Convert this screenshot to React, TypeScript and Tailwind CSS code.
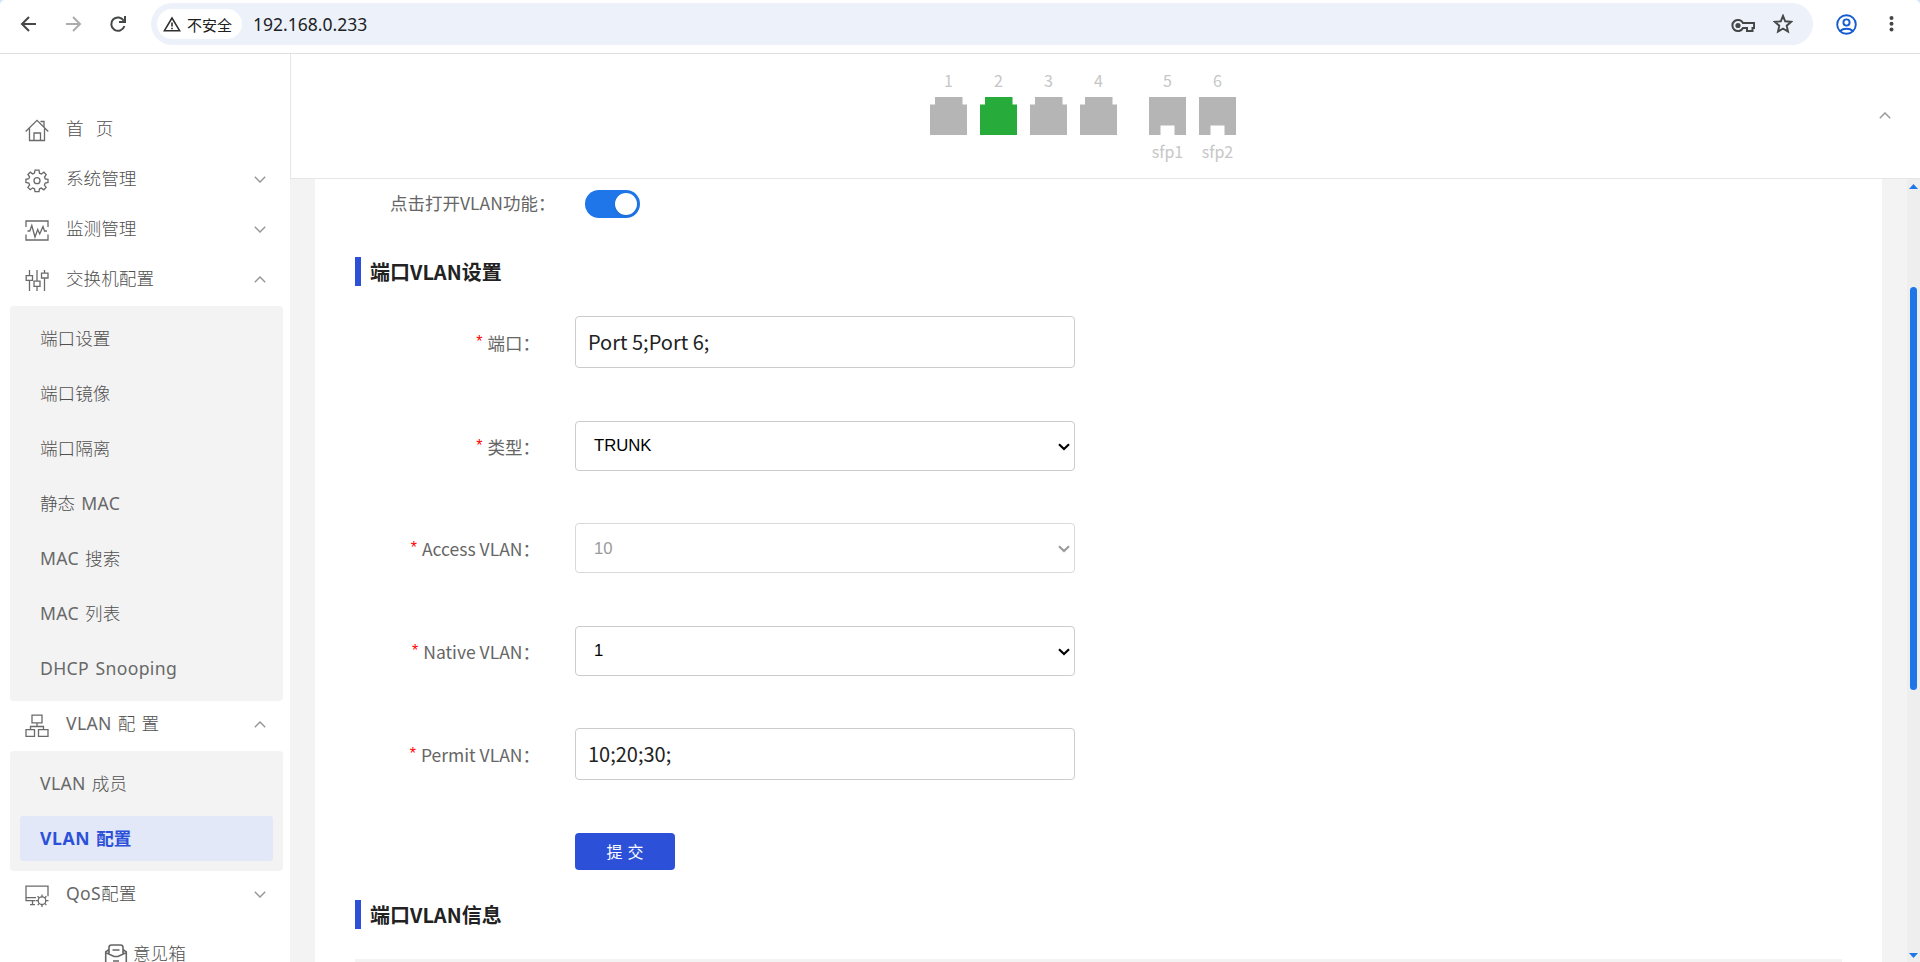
import React from "react";

const SANS = "font-['Noto_Sans','Noto_Sans_CJK_SC',sans-serif]";
const CJK = "font-['Noto_Sans_CJK_SC',sans-serif]";

type IconProps = { children: React.ReactNode };

function MenuIcon({ children }: IconProps) {
  return (
    <svg className="-ml-px h-6 w-6 shrink-0" viewBox="0 0 24 24" fill="none" stroke="#6a6a6a" strokeWidth="1.3">
      {children}
    </svg>
  );
}

const HomeIcon = () => (
  <MenuIcon>
    <path d="M.7 12.500 12 1.300 23.300 12.500M4.500 9.500v12h15v-12M9 21.500V14h6.500v7.500M15.500 2.500h3.500V8" />
  </MenuIcon>
);

const GearIcon = () => (
  <MenuIcon>
    <circle cx="12" cy="11.700" r="3" />
    <path d="M10 1.200h4l.5 3 1.900.8 2.500-1.800 2.300 2.400-1.700 2.500.7 1.700 2.800.5v3.200l-2.800.6-.8 1.900 1.700 2.500-2.300 2.300-2.500-1.700-1.800.7-.5 2.800h-4l-.5-2.800-1.900-.8-2.400 1.700-2.300-2.300 1.700-2.500-.8-1.900-2.900-.5v-3.200l2.900-.6.8-1.800-1.700-2.400 2.300-2.300 2.400 1.700 1.900-.8z" />
  </MenuIcon>
);

const MonitorIcon = () => (
  <MenuIcon>
    <path d="M1 8V2h22v6M1 15.500V21h22v-5.500M2.500 12h2.300l2-5.500L10 18l2.700-7.500 2 4.500 3.300-7.500 1.500 4.500h2.500" />
  </MenuIcon>
);

const SlidersIcon = () => (
  <MenuIcon>
    <path d="M4.500 1v5.500M4.500 11.500V22M12 1v11M12 17.500V22M19.500 1v3.500M19.500 9.500V22M1.200 6.700h6.300v4.600H1.200zM9 12.200h6v5.100H9zM16.500 4.200H23v4.800h-6.500z" />
  </MenuIcon>
);

const TopologyIcon = () => (
  <MenuIcon>
    <path d="M7 1.200h10v7.600H7zM1 15.700h8.500v6.600H1zM13.500 15.700H23v6.600h-9.500zM12 8.800v3.700M5.500 15.700v-3.200h13v3.200" />
  </MenuIcon>
);

const QosIcon = () => (
  <MenuIcon>
    <path d="M10.500 16.700H1V2.200h22v10M1 13.700h10M7.500 16.700v4M5 20.700h5" />
    <circle cx="17" cy="16.700" r="3.800" />
    <path d="M17 10.500v2.400M17 20.500v2.500M11 16.700h2.200M20.800 16.700h2.700M12.600 12.300l1.700 1.700M19.700 19.400l1.700 1.700M21.400 12.300l-1.700 1.700M14.300 19.400l-1.700 1.700" />
  </MenuIcon>
);

function Chevron({ up }: { up?: boolean }) {
  return (
    <svg className="h-[7px] w-3 shrink-0" viewBox="0 0 12 7" fill="none" stroke="#999" strokeWidth="1.5">
      <path d={up ? "M.8 6.200 6 1l5.200 5.200" : "M.8.8 6 6 11.200.8"} />
    </svg>
  );
}

/* Latin runs are set in the regular weight beside the light Chinese glyphs. */
function Mixed({ text, bold }: { text: string; bold?: boolean }) {
  return (
    <>
      {text.split(/([A-Za-z]+(?: [A-Za-z]+)*)/).map((run, i) =>
        /[A-Za-z]/.test(run) ? (
          <span key={i} className={bold ? "tracking-[0.6px]" : "font-normal tracking-[0.35px] text-[#686868]"}>
            {run}
          </span>
        ) : (
          run
        ),
      )}
    </>
  );
}

function MenuRow({ icon, label, state }: { icon: React.ReactNode; label: string; state?: "up" | "down" }) {
  return (
    <div className="flex h-[50px] items-center pl-[26px] pr-[24px]">
      {icon}
      <span className="-mt-[6px] ml-[17px] flex-1 whitespace-pre">
        <Mixed text={label} />
      </span>
      {state && (
        <span className="-mt-[3px] flex">
          <Chevron up={state === "up"} />
        </span>
      )}
    </div>
  );
}

function SubMenu({ items, active }: { items: string[]; active?: string }) {
  return (
    <div className="ml-[10px] mr-[7px] flex flex-col gap-[10px] rounded bg-[#f3f3f3] p-[10px]">
      {items.map((t) => (
        <div
          key={t}
          className={
            t === active
              ? "flex h-[45px] items-center rounded-[3px] bg-[#e2e8f7] pb-[2px] pl-5 font-bold text-[#2c51d8]"
              : "flex h-[45px] items-center pb-[2px] pl-5"
          }
        >
          <span className="whitespace-pre">
            <Mixed text={t} bold={t === active} />
          </span>
        </div>
      ))}
    </div>
  );
}

function Toolbar() {
  return (
    <div className="shrink-0 bg-[#d3e3fd]">
      <div className="flex h-[54px] items-center rounded-t-[5px] border-b border-[#dfe1e1] bg-white pb-[5px]">
        <div className="flex w-[151px] items-center gap-[27px] pl-[20px]">
          <svg className="h-[18px] w-[18px]" viewBox="0 0 18 18" fill="none" stroke="#454746" strokeWidth="2">
            <path d="M16 9H3M9 2 2 9l7 7" />
          </svg>
          <svg className="h-[18px] w-[18px]" viewBox="0 0 18 18" fill="none" stroke="#acacac" strokeWidth="2">
            <path d="M1 9h13M8 2l7 7-7 7" />
          </svg>
          <svg className="-ml-px h-[18px] w-[18px]" viewBox="0 0 18 18" fill="none" stroke="#454746" strokeWidth="2">
            <path d="M14.800 5.800A6.700 6.700 0 1 0 15.400 11M16 1v6h-6" />
          </svg>
        </div>
        <div className="flex h-[42px] w-[1662px] items-center rounded-full bg-[#ecf1fa] pl-[6px] pr-[20px]">
          <div className="flex h-[30px] w-[85px] items-center rounded-full bg-white pl-[6px]">
            <svg className="h-[17px] w-[18px]" viewBox="0 0 18 17" fill="none" stroke="#303030" strokeWidth="1.600">
              <path d="M9 2 1.400 14.700h15.200z" />
              <path d="M9 6.500v4M9 11.700v1.600" />
            </svg>
            <span className={`${CJK} ml-[6px] mt-px text-[15px] leading-5 text-[#202020]`}>不安全</span>
          </div>
          <span className={`${SANS} ml-[11px] flex-1 text-[17.500px] leading-6 text-[#202124]`}>192.168.0.233</span>
          <svg className="mr-[18px] mt-[2px] h-[15px] w-[24px]" viewBox="0 0 24 15" fill="none" stroke="#454746" strokeWidth="2">
            <path d="M12 5a5.600 5.600 0 1 0 0 5h4v3h5.500v-3h1.600V5z" />
            <circle cx="7" cy="7.500" r="2.600" fill="#454746" stroke="none" />
          </svg>
          <svg className="h-[20px] w-[20px]" viewBox="0 0 20 20" fill="none" stroke="#454746" strokeWidth="1.900">
            <path d="m10 1.800 2.200 5.500 6 .5-4.500 3.900 1.300 5.900-5-3.100-5 3.100 1.300-5.900L1.800 7.800l6-.5z" />
          </svg>
        </div>
        <svg className="ml-[23px] h-[21px] w-[21px]" viewBox="0 0 21 21" fill="none" stroke="#155bd0" strokeWidth="1.900">
          <circle cx="10.500" cy="10.500" r="9.300" />
          <circle cx="10.500" cy="8.500" r="3.100" />
          <path d="M4 17c3.500-3 9.500-3 13 0" />
        </svg>
        <svg className="ml-[32px] h-[18px] w-[5px]" viewBox="0 0 5 18" fill="#454746">
          <circle cx="2.500" cy="3" r="2" />
          <circle cx="2.500" cy="8.800" r="2" />
          <circle cx="2.500" cy="14.500" r="2" />
        </svg>
      </div>
    </div>
  );
}

function Port({ n, on, sfp }: { n: number; on?: boolean; sfp?: string }) {
  return (
    <div className={`${CJK} flex w-[37px] flex-col items-center text-[16px] leading-5 text-[#c6c6c6]`}>
      <span>{n}</span>
      <svg className="mb-[6px] mt-[7px] h-[38px] w-[37px]" viewBox="0 0 37 38" fill={on ? "#27ab3a" : "#b5b5b5"}>
        <path d={sfp ? "M0 0h37v38H25.500V28.500h-14V38H0z" : "M5 0h27.500v7.500H37V38H0V7.500h5z"} />
      </svg>
      {sfp && <span>{sfp}</span>}
    </div>
  );
}

function Heading({ children }: { children: React.ReactNode }) {
  return (
    <div className="flex h-[29px] items-center">
      <div className="h-[29px] w-[6px] bg-[#2c51d8]" />
      <h2 className={`${CJK} ml-[9px] text-[20px] font-bold leading-[29px] text-[#222]`}>{children}</h2>
    </div>
  );
}

function Label({ children }: { children: React.ReactNode }) {
  return (
    <label className="flex w-[185px] justify-end pt-px text-[17.500px] text-[#666]">
      <span className="-mt-px mr-[5px] font-['Liberation_Sans',sans-serif] text-[16px] text-[#f00]">*</span>
      {children}
    </label>
  );
}

function TextField({ label, value }: { label: string; value: string }) {
  return (
    <div className="flex h-[52px] items-center">
      <Label>{label}</Label>
      <input
        className="ml-[35px] h-[52px] w-[500px] rounded-[4px] border border-[#ccc] bg-white px-[12px] pb-px text-[20px] text-[#222]"
        defaultValue={value}
      />
    </div>
  );
}

function SelectField({ label, value, disabled }: { label: string; value: string; disabled?: boolean }) {
  return (
    <div className="flex h-[50px] items-center">
      <Label>{label}</Label>
      <div
        className={
          disabled
            ? "ml-[35px] flex h-[50px] w-[500px] items-center justify-between rounded-[4px] border border-[#d9d9d9] pl-[18px] pr-[4px] text-[#9a9a9a]"
            : "ml-[35px] flex h-[50px] w-[500px] items-center justify-between rounded-[4px] border border-[#ccc] pl-[18px] pr-[4px] text-black"
        }
      >
        <span className={`font-['Liberation_Sans',sans-serif] text-[16.700px] leading-6 ${disabled ? "mt-[2px]" : ""}`}>
          {value}
        </span>
        <svg className="mt-[1px] h-[8px] w-[12px]" viewBox="0 0 12 8" fill="none" stroke="currentColor" strokeWidth="2.100">
          <path d="m1 1.300 5 4.800 5-4.800" />
        </svg>
      </div>
    </div>
  );
}

export default function App() {
  return (
    <div className="flex h-[962px] w-[1920px] flex-col overflow-hidden bg-white">
      <Toolbar />
      <div className="flex min-h-0 flex-1">
        <nav
          className={`${SANS} w-[290px] shrink-0 overflow-hidden pt-[52px] text-[17.600px] font-light leading-6 text-[#505050] [word-spacing:1.500px]`}
        >
          <MenuRow icon={<HomeIcon />} label="首  页" />
          <MenuRow icon={<GearIcon />} label="系统管理" state="down" />
          <MenuRow icon={<MonitorIcon />} label="监测管理" state="down" />
          <MenuRow icon={<SlidersIcon />} label="交换机配置" state="up" />
          <SubMenu items={["端口设置", "端口镜像", "端口隔离", "静态 MAC", "MAC 搜索", "MAC 列表", "DHCP Snooping"]} />
          <MenuRow icon={<TopologyIcon />} label="VLAN 配 置" state="up" />
          <SubMenu items={["VLAN 成员", "VLAN 配置"]} active="VLAN 配置" />
          <MenuRow icon={<QosIcon />} label="QoS配置" state="down" />
          <div className="flex items-start pl-[104px] pt-[20px]">
            <svg className="mt-[2px] h-6 w-6" viewBox="0 0 24 24" fill="none" stroke="#666" strokeWidth="1.600">
              <path d="M5 11V4.500Q5 2 7.500 2h9Q19 2 19 4.500V11M5 6.500 1.700 8.800V22h20.600V8.800L19 6.500M1.700 9.500 10 13.500h4l8.300-4M8.500 7h7M9 18h6" />
            </svg>
            <span className="ml-[5px]">意见箱</span>
          </div>
        </nav>

        <div className="flex min-w-0 flex-1 flex-col">
          <header className="flex h-[125px] shrink-0 items-start border-b border-l border-[#e6e6e6]">
            <div className="ml-[639px] mt-[16px] flex gap-[13px]">
              <Port n={1} />
              <Port n={2} on />
              <Port n={3} />
              <Port n={4} />
              <div className="ml-[19px] flex gap-[13px]">
                <Port n={5} sfp="sfp1" />
                <Port n={6} sfp="sfp2" />
              </div>
            </div>
            <div className="ml-auto mr-[29px] mt-[58px] flex">
              <Chevron up />
            </div>
          </header>

          <div className="flex min-h-0 flex-1 bg-[#f3f3f3] pl-[25px]">
            <main className={`${CJK} w-[1567px] overflow-hidden bg-white pl-10 pt-[11px] leading-6`}>
              <div className="flex h-7 items-center pl-[35px]">
                <span className="-mt-[2px] w-[195px] text-[17.500px] text-[#666]">点击打开VLAN功能：</span>
                <div className="flex h-7 w-[55px] items-center justify-end rounded-full bg-[#1f76e8] pr-[3px]">
                  <div className="h-[22px] w-[22px] rounded-full bg-white shadow" />
                </div>
              </div>
              <div className="mt-[39px]">
                <Heading>端口VLAN设置</Heading>
              </div>
              <div className="mt-[30px] flex flex-col gap-[53px]">
                <TextField label="端口：" value="Port 5;Port 6;" />
                <SelectField label="类型：" value="TRUNK" />
                <div className="-mt-[1px]">
                  <SelectField label="Access VLAN：" value="10" disabled />
                </div>
                <SelectField label="Native VLAN：" value="1" />
                <div className="-mt-[1px]">
                  <TextField label="Permit VLAN：" value="10;20;30;" />
                </div>
              </div>
              <button className="ml-[220px] mt-[53px] block h-[37px] w-[100px] rounded-[4px] bg-[#2c51d8] pb-px text-[16px] text-white [word-spacing:1.400px]">
                提 交
              </button>
              <div className="mt-[30px]">
                <Heading>端口VLAN信息</Heading>
              </div>
              <div className="mr-10 mt-[30px] h-[50px] bg-[#f3f3f3]" />
            </main>
            <div className="ml-auto flex w-[13px] flex-col items-center bg-[#eee] pb-[4px] pt-[5px]">
              <svg className="h-[5px] w-[9px]" viewBox="0 0 9 5" fill="#1f76e8">
                <path d="M0 5 4.500 0 9 5z" />
              </svg>
              <div className="mt-[98px] h-[403px] w-[7px] rounded-full bg-[#1f76e8]" />
              <svg className="mt-auto h-[5px] w-[9px]" viewBox="0 0 9 5" fill="#1f76e8">
                <path d="M0 0h9L4.500 5z" />
              </svg>
            </div>
          </div>
        </div>
      </div>
    </div>
  );
}
